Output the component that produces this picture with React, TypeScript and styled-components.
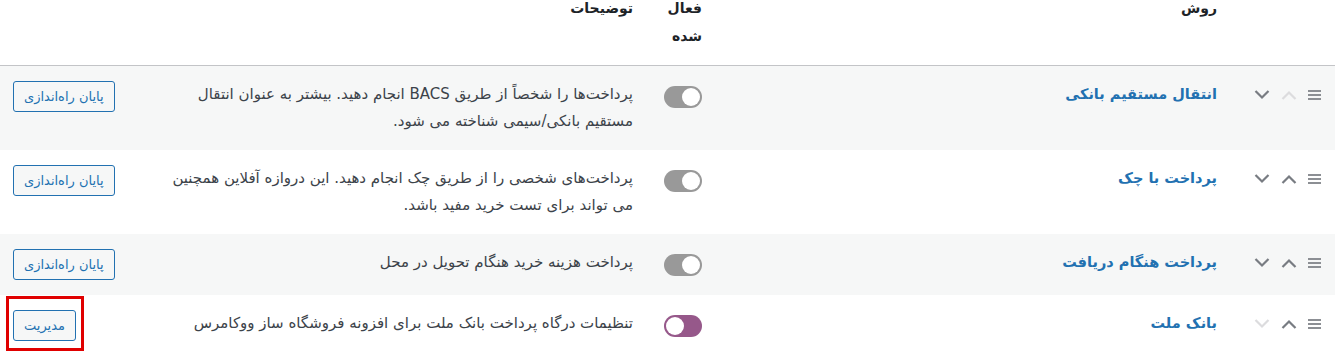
import React from "react";
import styled, { createGlobalStyle, css } from "styled-components";

const Global = createGlobalStyle`
  html, body { margin: 0; padding: 0; background: #ffffff; }
  body { font-family: Tahoma, "DejaVu Sans", sans-serif; color: #3c434a; overflow: hidden; }
`;

const Page = styled.div`
  direction: rtl;
  width: 1335px;
  margin-top: -6px;
`;

const Table = styled.table`
  width: 100%;
  border-collapse: collapse;
  table-layout: fixed;
  font-size: 14px;
`;

const HeadCell = styled.th<{ $w?: number }>`
  box-sizing: border-box;
  ${(p) => (p.$w ? css`width: ${p.$w}px;` : "")}
  text-align: right;
  vertical-align: top;
  padding: 0 10px 15px;
  font-weight: 700;
  font-size: 14px;
  line-height: 28px;
  color: #1d2327;
  border-bottom: 1px solid #c3c4c7;
`;

const Row = styled.tr<{ $alt?: boolean }>`
  background: ${(p) => (p.$alt ? "#f6f7f7" : "#ffffff")};
`;

const Cell = styled.td<{ $end?: boolean }>`
  box-sizing: border-box;
  vertical-align: top;
  padding: ${(p) => (p.$end ? "15px 10px 15px 13px" : "15px 10px")};
  line-height: 27px;
  text-align: ${(p) => (p.$end ? "left" : "right")};
`;

const SortBox = styled.div`
  display: flex;
  align-items: center;
  height: 27px;
  gap: 11px;
  padding-right: 4px;
`;

const NameLink = styled.a`
  color: #2271b1;
  font-weight: 700;
  font-size: 14.5px;
  text-decoration: none;
`;

const Desc = styled.div`
  font-size: 15px;
  color: #3c434a;
`;

const ToggleWrap = styled.div`
  height: 27px;
  display: flex;
  align-items: center;
  padding-top: 2px;
`;

const Toggle = styled.span<{ $on?: boolean }>`
  position: relative;
  display: inline-block;
  width: 38px;
  height: 22px;
  border-radius: 11px;
  background: ${(p) => (p.$on ? "#96588a" : "#999999")};
  &::after {
    content: "";
    position: absolute;
    top: 2px;
    ${(p) => (p.$on ? "left: 2px;" : "right: 2px;")}
    width: 18px;
    height: 18px;
    border-radius: 50%;
    background: #ffffff;
  }
`;

const Button = styled.a`
  display: inline-flex;
  align-items: center;
  height: 31px;
  box-sizing: border-box;
  padding: 0 10px;
  border: 1px solid #2271b1;
  border-radius: 3px;
  background: #f6f7f7;
  color: #2271b1;
  font-size: 13px;
  line-height: 1;
  text-decoration: none;
  white-space: nowrap;
  vertical-align: top;
`;

const Highlight = styled.span`
  position: relative;
  display: inline-block;
  vertical-align: top;
  &::before {
    content: "";
    position: absolute;
    top: -14px;
    bottom: -10px;
    left: -7px;
    right: -8px;
    border: 3px solid #e00000;
    pointer-events: none;
  }
`;

const Hamburger = () => (
  <svg width="13" height="10" viewBox="0 0 13 10">
    <g stroke="#8c8f94" strokeWidth="2">
      <line x1="0" y1="1" x2="13" y2="1" />
      <line x1="0" y1="5" x2="13" y2="5" />
      <line x1="0" y1="9" x2="13" y2="9" />
    </g>
  </svg>
);

const Chevron = ({ up, disabled }: { up?: boolean; disabled?: boolean }) => (
  <svg width="16" height="10" viewBox="0 0 16 10">
    <polyline
      points={up ? "1.5,9 8,2.5 14.5,9" : "1.5,1 8,7.5 14.5,1"}
      fill="none"
      stroke={disabled ? "#dcdcde" : "#787c82"}
      strokeWidth="2.2"
    />
  </svg>
);

type Gateway = {
  name: string;
  desc: string;
  on?: boolean;
  upDisabled?: boolean;
  downDisabled?: boolean;
  action: string;
  highlight?: boolean;
};

const gateways: Gateway[] = [
  {
    name: "انتقال مستقیم بانکی",
    desc: "پرداخت‌ها را شخصاً از طریق BACS انجام دهید. بیشتر به عنوان انتقال مستقیم بانکی/سیمی شناخته می شود.",
    upDisabled: true,
    action: "پایان راه‌اندازی",
  },
  {
    name: "پرداخت با چک",
    desc: "پرداخت‌های شخصی را از طریق چک انجام دهید. این دروازه آفلاین همچنین می تواند برای تست خرید مفید باشد.",
    action: "پایان راه‌اندازی",
  },
  {
    name: "پرداخت هنگام دریافت",
    desc: "پرداخت هزینه خرید هنگام تحویل در محل",
    action: "پایان راه‌اندازی",
  },
  {
    name: "بانک ملت",
    desc: "تنظیمات درگاه پرداخت بانک ملت برای افزونه فروشگاه ساز ووکامرس",
    on: true,
    downDisabled: true,
    action: "مدیریت",
    highlight: true,
  },
];

export default function App() {
  return (
    <Page>
      <Global />
      <Table>
        <thead>
          <tr>
            <HeadCell $w={108} />
            <HeadCell $w={515}>روش</HeadCell>
            <HeadCell $w={69}>فعال شده</HeadCell>
            <HeadCell>توضیحات</HeadCell>
            <HeadCell $w={145} />
          </tr>
        </thead>
        <tbody>
          {gateways.map((g, i) => (
            <Row key={g.name} $alt={i % 2 === 0}>
              <Cell>
                <SortBox>
                  <Hamburger />
                  <Chevron up disabled={g.upDisabled} />
                  <Chevron disabled={g.downDisabled} />
                </SortBox>
              </Cell>
              <Cell>
                <NameLink href="#">{g.name}</NameLink>
              </Cell>
              <Cell>
                <ToggleWrap>
                  <Toggle $on={g.on} />
                </ToggleWrap>
              </Cell>
              <Cell>
                <Desc>{g.desc}</Desc>
              </Cell>
              <Cell $end>
                {g.highlight ? (
                  <Highlight>
                    <Button href="#">{g.action}</Button>
                  </Highlight>
                ) : (
                  <Button href="#">{g.action}</Button>
                )}
              </Cell>
            </Row>
          ))}
        </tbody>
      </Table>
    </Page>
  );
}
